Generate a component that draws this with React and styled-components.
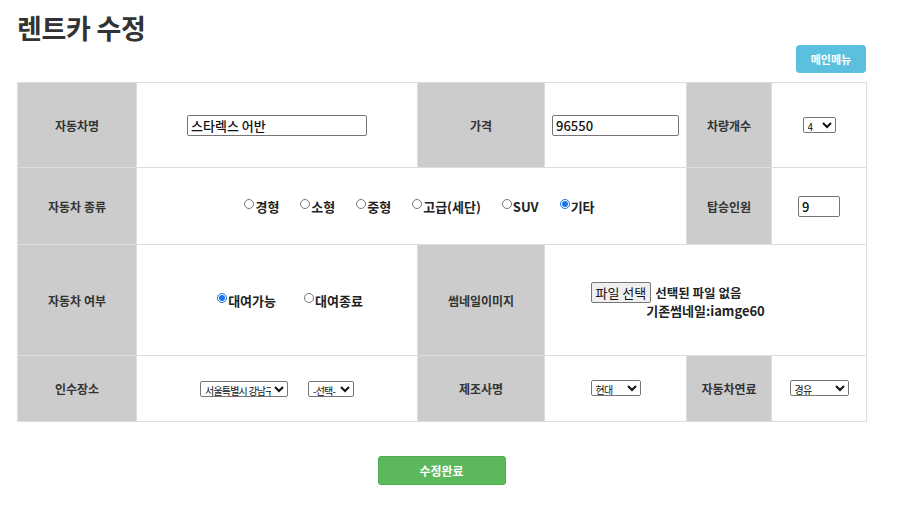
import React from "react";
import styled, { createGlobalStyle } from "styled-components";

const GlobalStyle = createGlobalStyle`
  body {
    margin: 0;
    background: #fff;
    font-family: "Noto Sans CJK KR", "Noto Sans", sans-serif;
    color: #222;
  }
`;

const RentCarEdit = () => {
  return (
    <StyledPage>
      <GlobalStyle />
      <Title>렌트카 수정</Title>
      <TopActions>
        <MenuButton>메인메뉴</MenuButton>
      </TopActions>

      <FormTable>
        <colgroup>
          <col style={{ width: 119 }} />
          <col style={{ width: 281 }} />
          <col style={{ width: 127 }} />
          <col style={{ width: 142 }} />
          <col style={{ width: 85 }} />
          <col style={{ width: 95 }} />
        </colgroup>
        <tbody>
          <Row $h={85}>
            <Head>자동차명</Head>
            <Cell>
              <TextInput $w={180} defaultValue="스타렉스 어반" />
            </Cell>
            <Head>가격</Head>
            <Cell>
              <TextInput $w={127} defaultValue="96550" />
            </Cell>
            <Head>차량개수</Head>
            <Cell>
              <Select $w={33} defaultValue="4">
                <option>1</option>
                <option>2</option>
                <option>3</option>
                <option>4</option>
                <option>5</option>
              </Select>
            </Cell>
          </Row>

          <Row $h={77}>
            <Head>자동차 종류</Head>
            <Cell colSpan={3}>
              <RadioGroup $shift={16}>
                {["경형", "소형", "중형", "고급(세단)", "SUV", "기타"].map((t) => (
                  <RadioLabel key={t} $gap={t === "기타" ? 0 : 21}>
                    <Radio type="radio" name="kind" defaultChecked={t === "기타"} />
                    {t}
                  </RadioLabel>
                ))}
              </RadioGroup>
            </Cell>
            <Head>탑승인원</Head>
            <Cell>
              <TextInput $w={42} defaultValue="9" />
            </Cell>
          </Row>

          <Row $h={111}>
            <Head>자동차 여부</Head>
            <Cell>
              <RadioGroup $shift={26}>
                <RadioLabel $gap={28}>
                  <Radio type="radio" name="rent" defaultChecked />
                  대여가능
                </RadioLabel>
                <RadioLabel $gap={0}>
                  <Radio type="radio" name="rent" />
                  대여종료
                </RadioLabel>
              </RadioGroup>
            </Cell>
            <Head>썸네일이미지</Head>
            <Cell colSpan={3}>
              <FileBox>
                <FileButton type="button">파일 선택</FileButton>
                <FileText>선택된 파일 없음</FileText>
              </FileBox>
              <Existing>기존썸네일:iamge60</Existing>
            </Cell>
          </Row>

          <Row $h={66}>
            <Head>인수장소</Head>
            <Cell>
              <SelectPair>
                <Select $w={88} defaultValue="서울특별시 강남구">
                  <option>서울특별시 강남구</option>
                  <option>서울특별시 강서구</option>
                </Select>
                <Select $w={46} defaultValue="-선택-">
                  <option>-선택-</option>
                </Select>
              </SelectPair>
            </Cell>
            <Head>제조사명</Head>
            <Cell>
              <Select $w={50} defaultValue="현대">
                <option>현대</option>
                <option>기아</option>
              </Select>
            </Cell>
            <Head>자동차연료</Head>
            <Cell>
              <Select $w={59} defaultValue="경유">
                <option>경유</option>
                <option>휘발유</option>
              </Select>
            </Cell>
          </Row>
        </tbody>
      </FormTable>

      <BottomActions>
        <SubmitButton>수정완료</SubmitButton>
      </BottomActions>
    </StyledPage>
  );
};

export default function App() {
  return <RentCarEdit />;
}

const StyledPage = styled.div`
  width: 849px;
  padding: 0 17px;
`;

const Title = styled.h1`
  margin: 0;
  padding-top: 10px;
  height: 35px;
  font-size: 27px;
  font-weight: 700;
  letter-spacing: -0.3px;
  color: #333;
  line-height: 35px;
`;

const TopActions = styled.div`
  display: flex;
  justify-content: flex-end;
  margin-bottom: 9px;
`;

const MenuButton = styled.button`
  width: 70px;
  height: 28px;
  border: none;
  border-radius: 4px;
  background: #5bc0de;
  color: #fff;
  font-family: inherit;
  font-size: 11px;
  font-weight: 700;
  padding: 0;
`;

const FormTable = styled.table`
  width: 849px;
  table-layout: fixed;
  border-collapse: collapse;
  border: 1px solid #ddd;
`;

const Row = styled.tr`
  height: ${(p) => p.$h}px;
`;

const Head = styled.th`
  background: #ccc;
  border: 1px solid #ddd;
  font-size: 12px;
  font-weight: 700;
  color: #333;
  text-align: center;
  padding: 0;
`;

const Cell = styled.td`
  border: 1px solid #ddd;
  text-align: center;
  font-size: 13px;
  font-weight: 700;
  color: #222;
  padding: 0;
`;

const TextInput = styled.input`
  box-sizing: border-box;
  width: ${(p) => p.$w}px;
  height: 21px;
  border: 1px solid #767676;
  border-radius: 2px;
  padding: 0 3px;
  font-family: inherit;
  font-size: 13px;
  font-weight: 500;
  color: #111;
`;

const Select = styled.select`
  box-sizing: border-box;
  width: ${(p) => p.$w}px;
  height: 16px;
  border: 1px solid #767676;
  border-radius: 2px;
  padding: 0;
  font-family: inherit;
  font-size: 10px;
  letter-spacing: -0.8px;
  color: #111;
  background: #fff;
`;

const SelectPair = styled.div`
  display: flex;
  justify-content: center;
  align-items: center;
  gap: 20px;
`;

const RadioGroup = styled.div`
  display: flex;
  justify-content: center;
  align-items: center;
  padding-left: ${(p) => p.$shift}px;
`;

const RadioLabel = styled.label`
  display: inline-flex;
  align-items: flex-start;
  margin-right: ${(p) => p.$gap}px;
  line-height: 17px;
`;

const Radio = styled.input`
  width: 10px;
  height: 10px;
  margin: 1px 1px 0 0;
  accent-color: #1a73e8;
`;

const FileBox = styled.div`
  display: inline-flex;
  align-items: center;
  width: 230px;
  text-align: left;
`;

const FileButton = styled.button`
  height: 21px;
  padding: 0 4px;
  border: 1px solid #767676;
  border-radius: 2px;
  background: #efefef;
  font-family: inherit;
  font-size: 13px;
  font-weight: 400;
  color: #111;
  margin-right: 4px;
`;

const FileText = styled.span`
  font-size: 12.5px;
`;

const Existing = styled.div`
  line-height: 16px;
  font-size: 13px;
`;

const BottomActions = styled.div`
  display: flex;
  justify-content: center;
  padding-top: 34px;
`;

const SubmitButton = styled.button`
  width: 128px;
  height: 29px;
  border: 1px solid #4cae4c;
  border-radius: 3px;
  background: #5cb85c;
  color: #fff;
  font-family: inherit;
  font-size: 12px;
  font-weight: 700;
`;
